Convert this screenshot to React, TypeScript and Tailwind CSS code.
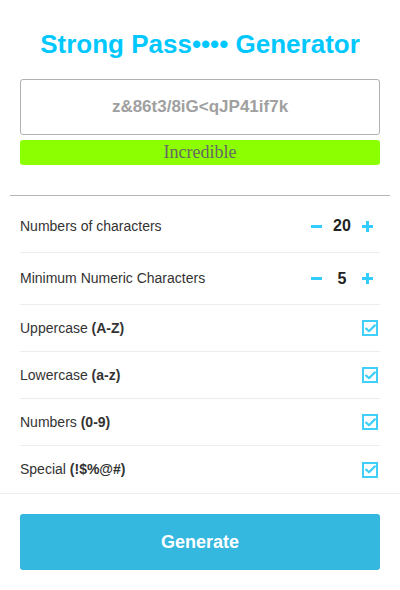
import React from "react";

const Check = () => (
  <div className="w-4 h-4 border-2 border-[#3fcff8] flex items-center justify-center box-border">
    <svg width="11" height="9" viewBox="0 0 11 9" fill="none">
      <path d="M1.2 4.6 L4 7.2 L9.8 1.4" stroke="#3fcff8" strokeWidth="2.2" strokeLinecap="round" strokeLinejoin="round" />
    </svg>
  </div>
);

const Stepper = ({ value }: { value: string }) => (
  <div className="flex items-center mr-[5px]">
    <span className="w-[11px] h-[3px] bg-[#33ccff] mr-[10px]" />
    <span className="w-[20px] text-center text-[16px] font-bold text-[#222]">{value}</span>
    <span className="relative w-[11px] h-[11px] ml-[10px]">
      <span className="absolute left-0 top-[4px] w-[11px] h-[3px] bg-[#33ccff]" />
      <span className="absolute left-[4px] top-0 w-[3px] h-[11px] bg-[#33ccff]" />
    </span>
  </div>
);

const Row = ({ children, right, h = "h-[47px]" }: { children: React.ReactNode; right: React.ReactNode; h?: string }) => (
  <div className={`flex items-center justify-between border-b border-[#ececec] ${h} pr-[2px]`}>
    <div className="text-[14px] text-[#333]">{children}</div>
    {right}
  </div>
);

export default function App() {
  return (
    <div className="w-[400px] h-[590px] bg-white" style={{ fontFamily: '"Liberation Sans", Arial, sans-serif' }}>
      <h1 className="text-center text-[26px] font-bold text-[#00c8ff] pt-[29px] leading-[30px]">
        Strong Pass•••• Generator
      </h1>
      <div className="px-[20px] mt-[20px]">
        <div className="h-[56px] border border-[#b0b0b0] rounded-[3px] flex items-center justify-center text-[17px] font-bold text-[#a0a0a0]">
          z&amp;86t3/8iG&lt;qJP41if7k
        </div>
        <div
          className="mt-[5px] h-[25px] bg-[#8cff00] rounded-[3px] flex items-center justify-center text-[18px] text-[#666]"
          style={{ fontFamily: '"Liberation Serif", "Times New Roman", serif' }}
        >
          Incredible
        </div>
      </div>
      <div className="mx-[10px] mt-[30px] border-t border-[#b4b4b4]" />
      <div className="px-[20px]">
        <Row h="h-[57px] pt-[4px]" right={<Stepper value="20" />}>Numbers of characters</Row>
        <Row h="h-[52px]" right={<Stepper value="5" />}>Minimum Numeric Characters</Row>
        <Row right={<Check />}>
          Uppercase <b>(A-Z)</b>
        </Row>
        <Row right={<Check />}>
          Lowercase <b>(a-z)</b>
        </Row>
        <Row right={<Check />}>
          Numbers <b>(0-9)</b>
        </Row>
        <div className="flex items-center justify-between h-[47px] pr-[2px]">
          <div className="text-[14px] text-[#333]">
            Special <b>(!$%@#)</b>
          </div>
          <Check />
        </div>
      </div>
      <div className="border-t border-[#ececec]" />
      <div className="px-[20px] pt-[20px]">
        <button className="w-full h-[56px] bg-[#35b8e0] rounded-[3px] text-white font-bold text-[18px]">
          Generate
        </button>
      </div>
    </div>
  );
}
